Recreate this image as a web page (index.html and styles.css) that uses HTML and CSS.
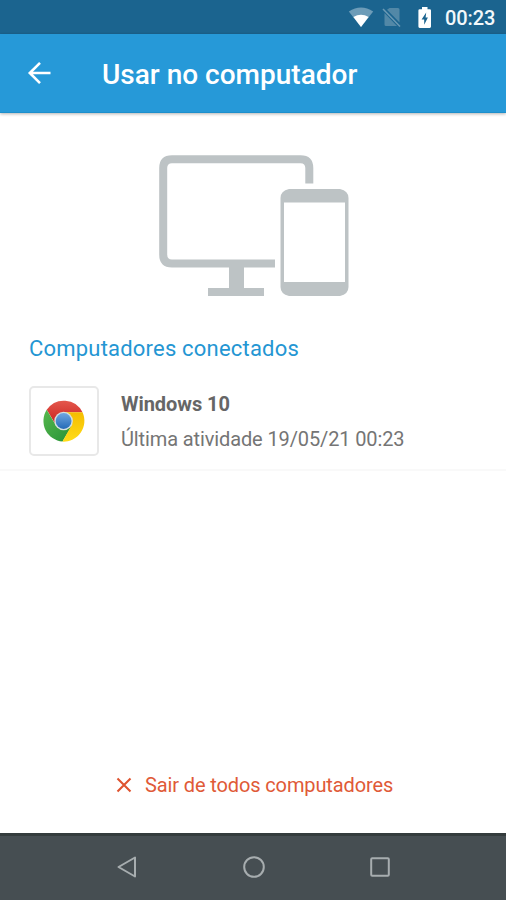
FILE: index.html
```html
<!DOCTYPE html>
<html lang="pt-BR">
<head>
<meta charset="utf-8">
<title>Usar no computador</title>
<link rel="stylesheet" href="styles.css">
</head>
<body>
<div class="screen">
  <div class="status-bar">
    <svg class="status-icons" width="80" height="34" viewBox="348 0 80 34">
      <path d="M348.8 11.5Q361 3.5 373.2 11.5L361 27Z" fill="#6d9cb8"/>
      <path d="M353.4 17Q361 12.5 368.6 17L361 27Z" fill="#fff"/>
      <path d="M389.500 8H398Q399.500 8 399.500 9.500V22.500L387 9.800ZM384.500 13V24.500Q384.500 26 386 26H397Z" fill="#5288a7"/>
      <path d="M383 9L400 26.500" stroke="#6b99b4" stroke-width="1.500"/>
      <path d="M422 7h5.500v2.300h2.200q1.300 0 1.300 1.300v16q0 1.300-1.300 1.300h-10q-1.300 0-1.300-1.300v-16q0-1.300 1.300-1.300h2.300z" fill="#fff"/>
      <path d="M426.200 12.500L421.600 19.500H424.200V24.800L427.900 17.500H425.600Z" fill="#1b648f"/>
    </svg>
    <span class="clock">00:23</span>
  </div>
  <header class="app-bar">
    <svg class="back" width="24" height="24" viewBox="0 0 24 24" fill="none" stroke="#fff" stroke-width="2.600"><path d="M13 1.800L2.800 12L13 22.200M3 12H23.500"/></svg>
    <h1>Usar no computador</h1>
  </header>
  <main>
    <svg class="devices" width="190" height="142" viewBox="159 155 190 142">
      <path d="M275 263.500H172Q163.200 263.500 163.200 254.500V168Q163.200 159.200 172 159.200H300.500Q309.300 159.200 309.300 168V183.500" fill="none" stroke="#bdc3c5" stroke-width="8"/>
      <path d="M229 267H244V288H264V296H208V288H229Z" fill="#bdc3c5"/>
      <path fill-rule="evenodd" d="M289 189H340Q348.500 191 348.500 198V287Q348.500 294 340 296H289Q280.500 294 280.500 287V198Q280.500 191 289 189ZM284 202.500V282H345V202.500Z" fill="#bdc3c5"/>
    </svg>
    <h2>Computadores conectados</h2>
    <div class="session">
      <div class="browser">
        <svg width="42" height="42" viewBox="-21 -21 42 42">
          <defs>
            <linearGradient id="red" x1="0" y1="0" x2="0" y2="1"><stop offset="0" stop-color="#e4574c"/><stop offset="1" stop-color="#c9201d"/></linearGradient>
            <linearGradient id="green" x1="0" y1="0" x2="1" y2="1"><stop offset="0" stop-color="#57b84d"/><stop offset="1" stop-color="#259137"/></linearGradient>
            <linearGradient id="yellow" x1="0" y1="0" x2="0" y2="1"><stop offset="0" stop-color="#f5bd00"/><stop offset="1" stop-color="#ffdc18"/></linearGradient>
            <linearGradient id="blue" x1="0" y1="0" x2="0" y2="1"><stop offset="0" stop-color="#70a6df"/><stop offset="1" stop-color="#246bb8"/></linearGradient>
          </defs>
          <path d="M-17.300-11.200A20.700 20.700 0 0 1 18.500-8.700H0L-8 4Z" fill="url(#red)"/>
          <path d="M-17.300-11.200A20.700 20.700 0 0 0-1.500 20.600L8 4.500H-8Z" fill="url(#green)"/>
          <path d="M18.500-8.700A20.700 20.700 0 0 1-1.500 20.600L7.500 4.500L0-8.700Z" fill="url(#yellow)"/>
          <circle cx="-.4" r="9.300" fill="#d5e0df"/><circle cx="-.4" r="7.900" fill="url(#blue)"/>
        </svg>
      </div>
      <div class="details">
        <div class="name">Windows 10</div>
        <div class="activity">Última atividade 19/05/21 00:23</div>
      </div>
    </div>
    <div class="sign-out">
      <svg width="16" height="16" viewBox="0 0 16 16"><path d="M1.500 1.500L14.500 14.500M14.500 1.500L1.500 14.500" stroke="#df5430" stroke-width="2.100"/></svg>
      <span>Sair de todos computadores</span>
    </div>
  </main>
  <nav class="nav-bar">
    <svg width="24" height="24" viewBox="0 0 24 24"><path d="M20 2.500V21.500L3.500 12Z"/></svg>
    <svg width="24" height="24" viewBox="0 0 24 24"><circle cx="12" cy="12" r="9.800"/></svg>
    <svg width="24" height="24" viewBox="0 0 24 24"><rect x="3.200" y="3.200" width="17.600" height="17.600" rx="1"/></svg>
  </nav>
</div>
</body>
</html>
```
FILE: styles.css
```css
* { box-sizing: border-box; }
body { margin: 0; font-family: Roboto, sans-serif; background: #fff; }
h1, h2 { margin: 0; }
svg { display: block; flex: none; overflow: visible; }
.screen { width: 506px; height: 900px; display: flex; flex-direction: column; overflow: hidden; }
.status-bar { height: 34px; flex: none; background: #1b648f; display: flex; justify-content: flex-end; align-items: center; padding-right: 11px; gap: 17px; }
.clock { color: #f2f8fb; font-size: 20px; font-weight: 500; line-height: 24px; padding-top: 1px; width: 50px; white-space: nowrap; letter-spacing: -0.1px; }
.app-bar { height: 79px; flex: none; background: #2699d8; border-bottom: 1px solid #1d8fcc; box-shadow: 0 1px 3px rgba(0,0,0,.3); display: flex; align-items: center; padding: 2px 0 0 27px; position: relative; }
.back { margin-top: -3px; }
.app-bar h1 { margin: 1px 0 0 51px; color: #fff; font-size: 28px; line-height: 32px; font-weight: 500; white-space: nowrap; }
main { flex: 1; min-height: 0; display: flex; flex-direction: column; padding-top: 42px; }
.devices { margin-left: 159px; }
h2 { margin: 37px 0 0 29px; color: #2496d3; font-size: 22px; letter-spacing: 0.2px; line-height: 30px; font-weight: 400; white-space: nowrap; }
.session { height: 107px; flex: none; padding: 22px 0 0 29px; display: flex; border-bottom: 2px solid #f9f9f9; }
.browser { width: 70px; height: 70px; flex: none; border: 2px solid #e8e8e8; border-radius: 5px; display: grid; place-items: center; margin-top: -0.5px; }
.details { margin-left: 22px; padding-top: 6px; white-space: nowrap; }
.name { color: #666; font-size: 20px; letter-spacing: -0.05px; line-height: 24px; font-weight: 700; }
.activity { margin-top: 11px; color: #757575; font-size: 20px; letter-spacing: -0.12px; line-height: 24px; }
.sign-out { display: flex; align-items: center; margin: auto 0 35px 116px; gap: 13px; color: #e05a37; font-size: 20px; letter-spacing: -0.12px; line-height: 26px; white-space: nowrap; }
.nav-bar { height: 67px; flex: none; background: #464e52; border-top: 3px solid #343c3d; display: flex; gap: 102.500px; padding: 19px 0 0 115px; }
.nav-bar svg { fill: none; stroke: #a7adaf; stroke-width: 2; stroke-linejoin: round; }
```
